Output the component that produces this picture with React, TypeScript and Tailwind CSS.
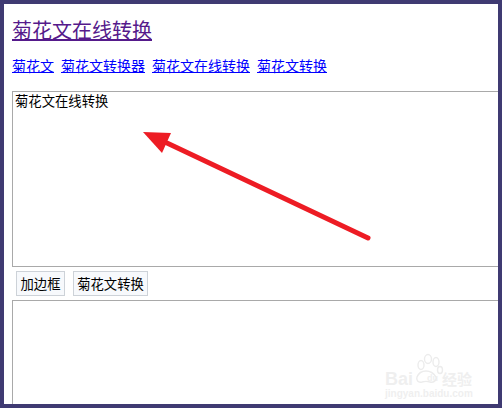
// Online chrysanthemum-text converter page, with the arrow and watermark laid over it
const cjk = "font-['SimSun','Noto_Sans_CJK_SC',sans-serif]"

const links = ['菊花文', '菊花文转换器', '菊花文在线转换', '菊花文转换']

function Arrow() {
  return (
    <svg className="absolute left-[0px] top-[0px] pointer-events-none" width="502" height="408" viewBox="0 0 502 408">
      <line x1="167" y1="143" x2="368" y2="238" stroke="#ed1c24" strokeWidth="5" strokeLinecap="round" />
      <polygon points="143,132 171,133 162,153" fill="#ed1c24" />
    </svg>
  )
}

function Watermark() {
  return (
    <div className="absolute left-[380px] top-[370px] w-[112px] text-[#efefef] pointer-events-none">
      <svg className="absolute left-[32px] top-[-17px]" width="32" height="36" viewBox="0 0 32 36" fill="none" stroke="#ececec" strokeWidth="1.4">
        <ellipse cx="9" cy="12" rx="3" ry="4.5" />
        <ellipse cx="16" cy="6" rx="3.5" ry="4.5" />
        <ellipse cx="24" cy="9" rx="3" ry="4.5" />
        <ellipse cx="28" cy="17" rx="2.5" ry="3.5" />
        <path d="M5 24c2-5 6-6 9-6s7 1 10 6c1 4-3 6-6 5-3-1-5-1-8 0-4 1-6-2-5-5z" />
      </svg>
      <div className="flex items-center h-[17px] pl-[5px] font-['Liberation_Sans',sans-serif] text-[18px] font-bold leading-none">
        <span className="w-[30px]">Bai</span>
        <span className="w-[27px] pl-[12px] text-[9px]">du</span>
        <span className={`${cjk} text-[15px] font-bold whitespace-nowrap`}>经验</span>
      </div>
      <div className="pl-[5px] mt-[2px] font-['Liberation_Sans',sans-serif] text-[10px] font-bold leading-none whitespace-nowrap">
        jingyan.baidu.com
      </div>
    </div>
  )
}

export default function App() {
  return (
    <div className={`relative w-[502px] h-[408px] overflow-hidden bg-white text-black ${cjk}`}>
      <div className="w-full h-full overflow-hidden border-4 border-[#3f3a72] pl-2">
        <h1 className="mt-[12px] text-[20px] leading-[28px] font-normal">
          <a href="#" className="text-[#551a8b] underline">菊花文在线转换</a>
        </h1>
        <div className="mt-[11px] flex gap-[7px] text-[14px] leading-[20px] whitespace-nowrap">
          {links.map(l => (
            <a key={l} href="#" className="text-[#0000ff] underline">{l}</a>
          ))}
        </div>
        <textarea
          readOnly
          defaultValue="菊花文在线转换"
          className={`block mt-[16px] w-[520px] h-[176px] border border-[#a9a9a9] px-[2px] py-[1px] text-[13.33px] leading-[16px] resize-none outline-none ${cjk}`}
        />
        <div className="mt-[4px] pl-1 flex gap-2">
          <button className="w-[49px] h-[25px] border border-[#cdd2d8] bg-[#f7f9fc] text-[13.33px] leading-none">加边框</button>
          <button className="w-[75px] h-[25px] border border-[#cdd2d8] bg-[#f7f9fc] text-[13.33px] leading-none">菊花文转换</button>
        </div>
        <textarea
          readOnly
          className="block mt-[4px] w-[520px] h-[176px] border border-[#a9a9a9] resize-none outline-none"
        />
      </div>
      <Arrow />
      <Watermark />
    </div>
  )
}
